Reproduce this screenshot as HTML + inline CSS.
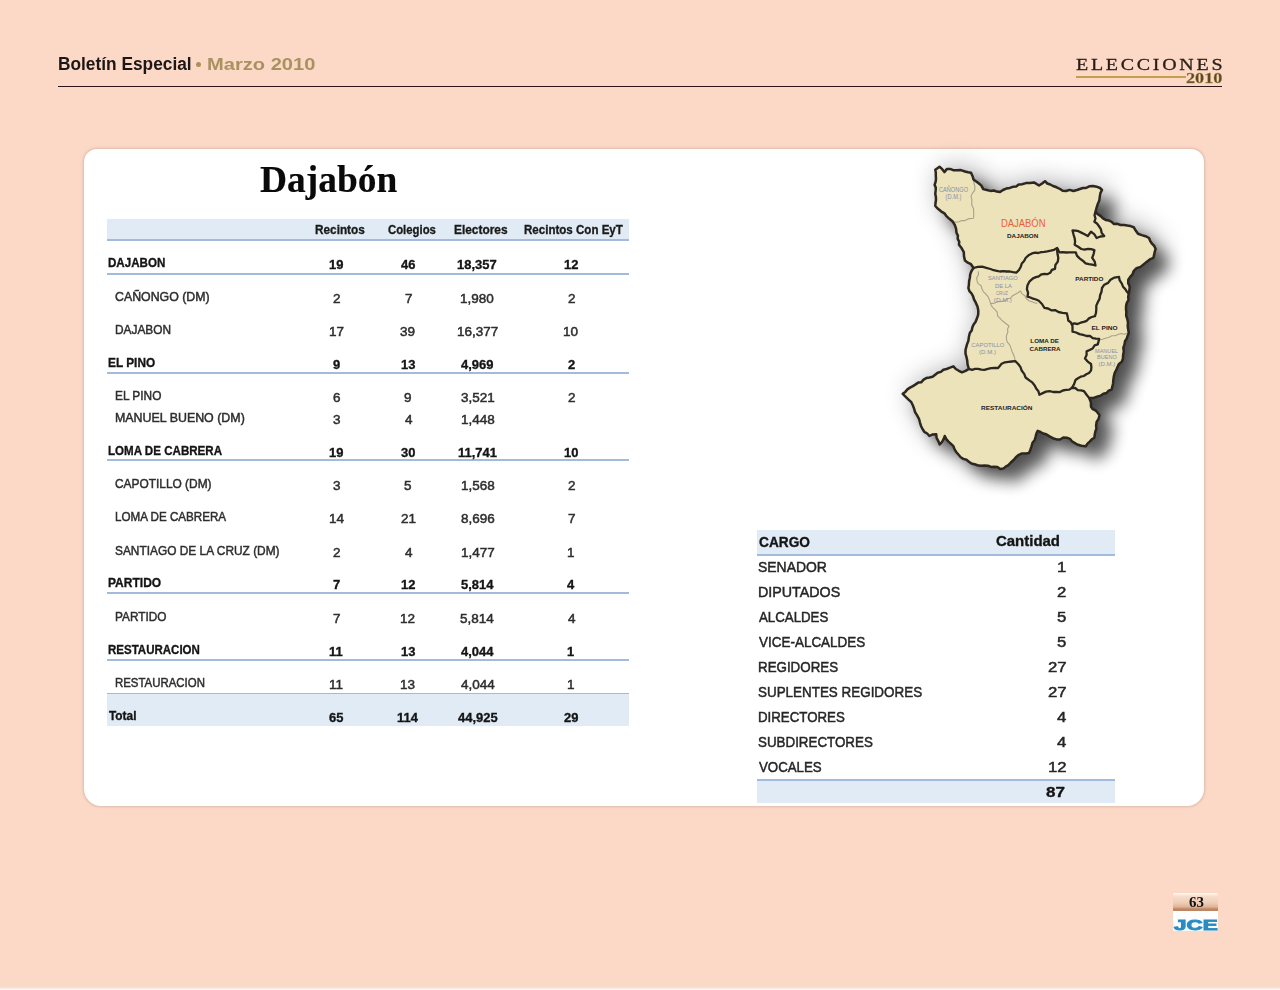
<!DOCTYPE html>
<html><head><meta charset="utf-8">
<style>
html,body{margin:0;padding:0;}
body{width:1280px;height:990px;background:#FCD9C6;position:relative;overflow:hidden;font-family:"Liberation Sans",sans-serif;}
.a{position:absolute;white-space:nowrap;line-height:1;transform-origin:0 0;}
.r{position:absolute;}
</style></head>
<body>
<div class="r" style="left:0;top:986px;width:1280px;height:4px;background:linear-gradient(#F6DCCB,#F2E4DC 50%,#FFFFFF);"></div>
<!-- header rule -->
<div class="r" style="left:58px;top:86px;width:1164px;height:1.3px;background:#2a1616;"></div>
<div class="r" style="left:196.2px;top:62.1px;width:5px;height:5px;border-radius:50%;background:#A8915A;"></div>
<div class="r" style="left:1075.5px;top:75.6px;width:110px;height:2.2px;background:#C59E4E;"></div>

<!-- card -->
<div class="r" style="left:84px;top:149px;width:1120px;height:656.8px;background:#FFFFFF;border-radius:13px 13px 17px 17px;box-shadow:0 0 2.5px 0.5px rgba(175,140,130,0.38);"></div>

<!-- left table bands & lines -->
<div class="r" style="left:107px;top:219px;width:522px;height:20.5px;background:#E1EBF5;"></div>
<div class="r" style="left:107px;top:239px;width:522px;height:1.6px;background:#A2BADB;"></div>
<div class="r" style="left:107px;top:272.5px;width:522px;height:2px;background:#A2BADB;"></div>
<div class="r" style="left:107px;top:372px;width:522px;height:2px;background:#A2BADB;"></div>
<div class="r" style="left:107px;top:459.4px;width:522px;height:2px;background:#A2BADB;"></div>
<div class="r" style="left:107px;top:592.3px;width:522px;height:2px;background:#A2BADB;"></div>
<div class="r" style="left:107px;top:659.3px;width:522px;height:2px;background:#A2BADB;"></div>
<div class="r" style="left:107px;top:693px;width:522px;height:33.4px;background:#E1EBF5;"></div>
<div class="r" style="left:107px;top:692.6px;width:522px;height:1.8px;background:#A2BADB;"></div>

<!-- right table bands & lines -->
<div class="r" style="left:756.8px;top:529.8px;width:357.8px;height:24.6px;background:#E1EBF5;"></div>
<div class="r" style="left:756.8px;top:554.1px;width:357.8px;height:1.9px;background:#A2BADB;"></div>
<div class="r" style="left:756.8px;top:779.5px;width:357.8px;height:23.4px;background:#E1EBF5;"></div>
<div class="r" style="left:756.8px;top:778.8px;width:357.8px;height:1.9px;background:#A2BADB;"></div>

<!-- logo -->
<div class="r" style="left:1172.6px;top:892.7px;width:45.3px;height:38.2px;background:linear-gradient(#EAF8FB,#FFFFFF 60%,#F4FBFD);border-radius:2px;"></div>
<div class="r" style="left:1172.6px;top:892.7px;width:45.3px;height:18.3px;background:linear-gradient(#FFF8F0,#F6DCC9 20%,#EFCDB6 55%,#E0B394 78%,#C08A68 88%,#BA8462 100%);border-radius:2px 2px 0 0;"></div>

<svg class="r" style="left:860px;top:140px;" width="340" height="380" viewBox="860 140 340 380">
<defs>
<filter id="sh" x="-30%" y="-30%" width="170%" height="170%">
<feGaussianBlur in="SourceAlpha" stdDeviation="8" result="b1"/>
<feOffset in="b1" dx="14" dy="13" result="o1"/>
<feComponentTransfer in="o1" result="c1"><feFuncA type="linear" slope="0.6"/></feComponentTransfer>
<feGaussianBlur in="SourceAlpha" stdDeviation="14" result="b2"/>
<feOffset in="b2" dx="5" dy="0" result="o2"/>
<feComponentTransfer in="o2" result="c2"><feFuncA type="linear" slope="0.38"/></feComponentTransfer>
<feMerge><feMergeNode in="c2"/><feMergeNode in="c1"/></feMerge>
</filter>
</defs>
<path id="outl" d="M935.3,169.7 L939.5,166.7 L942.2,169.2 L944.4,172.1 L946.8,169.1 L950.1,168.9 L953.2,170.2 L956.5,170.3 L960.9,170.1 L965.0,171.5 L968.0,172.2 L971.0,172.7 L972.5,176.0 L973.5,179.4 L978.3,183.0 L981.4,185.6 L983.2,189.1 L986.8,190.0 L990.5,190.9 L993.8,190.5 L996.8,191.6 L1000.0,192.1 L1003.0,190.0 L1006.2,188.6 L1009.8,187.9 L1012.8,186.8 L1016.1,186.6 L1018.8,184.5 L1022.0,184.2 L1025.9,183.1 L1030.0,183.0 L1034.0,182.4 L1039.0,185.5 L1042.1,183.5 L1045.0,181.2 L1047.3,183.5 L1050.3,184.5 L1053.0,186.0 L1056.6,187.3 L1060.0,189.0 L1062.7,190.8 L1066.0,191.0 L1069.6,189.9 L1073.4,191.0 L1077.0,190.0 L1079.9,189.0 L1082.9,188.0 L1086.0,188.0 L1089.3,186.3 L1093.0,186.0 L1096.6,186.7 L1100.0,188.0 L1102.0,190.0 L1100.4,193.1 L1099.8,196.6 L1099.3,200.6 L1097.7,204.2 L1096.5,208.0 L1095.5,211.9 L1097.8,214.3 L1100.7,216.1 L1103.0,218.4 L1105.7,219.9 L1108.9,220.5 L1111.6,221.9 L1114.0,224.0 L1117.4,223.8 L1120.6,225.0 L1124.0,225.0 L1127.3,225.6 L1130.5,226.1 L1133.7,227.2 L1135.7,230.6 L1138.0,233.8 L1141.7,235.1 L1145.5,236.2 L1149.0,238.0 L1150.2,241.0 L1152.0,243.7 L1154.3,246.0 L1155.6,249.0 L1154.7,251.9 L1154.1,254.9 L1153.4,257.8 L1149.8,259.4 L1146.6,261.9 L1143.6,264.4 L1140.5,266.9 L1136.5,268.1 L1133.7,271.0 L1132.5,274.3 L1130.2,276.9 L1128.3,279.7 L1128.2,283.2 L1129.7,286.5 L1129.4,290.0 L1128.8,293.8 L1128.2,296.8 L1128.5,300.0 L1126.8,302.8 L1126.1,305.9 L1126.0,309.0 L1126.3,312.4 L1126.2,315.8 L1127.3,319.0 L1128.0,322.5 L1127.7,326.0 L1128.2,329.5 L1128.8,333.0 L1127.6,335.8 L1126.7,338.7 L1125.0,341.3 L1124.5,344.4 L1123.3,347.8 L1123.8,351.4 L1123.1,354.9 L1123.0,358.4 L1121.8,361.7 L1119.0,363.9 L1117.5,367.0 L1116.2,370.2 L1114.6,373.2 L1113.8,376.6 L1113.3,380.0 L1113.1,383.2 L1112.4,386.4 L1111.6,389.5 L1108.7,390.6 L1106.5,393.0 L1103.4,393.7 L1100.8,395.6 L1097.8,396.4 L1093.6,397.9 L1089.2,398.1 L1090.9,402.2 L1091.0,406.7 L1092.8,409.2 L1095.7,410.5 L1097.7,412.8 L1099.5,415.3 L1098.6,418.8 L1096.6,422.0 L1096.1,425.6 L1096.4,428.7 L1095.3,431.7 L1094.7,434.7 L1094.4,437.7 L1091.8,439.3 L1089.7,441.6 L1087.5,443.6 L1085.8,446.2 L1081.4,445.8 L1077.2,444.5 L1074.5,442.9 L1071.9,441.3 L1069.9,438.8 L1066.9,437.7 L1063.3,437.5 L1060.1,439.5 L1056.6,439.4 L1052.9,438.2 L1049.5,436.4 L1046.2,434.2 L1043.2,433.5 L1040.5,432.0 L1037.7,430.8 L1036.3,433.7 L1035.5,437.0 L1034.6,440.2 L1032.5,442.8 L1031.5,446.3 L1030.4,449.7 L1029.0,453.1 L1025.6,453.5 L1022.0,453.4 L1018.8,454.8 L1015.9,457.2 L1013.6,460.0 L1010.8,462.5 L1008.4,465.2 L1005.7,466.6 L1003.3,468.6 L1000.2,469.0 L997.4,467.0 L994.3,466.8 L991.2,466.9 L987.9,465.8 L984.4,465.5 L980.9,465.8 L977.5,465.2 L974.6,464.2 L971.5,463.5 L968.9,461.7 L966.5,459.8 L963.3,458.9 L960.7,457.2 L958.6,454.8 L956.4,452.2 L954.6,449.4 L953.4,446.2 L951.0,443.9 L948.5,441.6 L946.3,439.1 L944.8,436.0 L943.6,439.2 L942.0,442.0 L939.7,444.5 L938.3,441.1 L936.6,437.9 L936.2,434.2 L932.7,434.4 L929.4,436.0 L927.2,433.5 L924.3,431.8 L922.5,429.0 L920.9,425.7 L919.9,422.3 L919.0,418.8 L917.1,415.4 L915.1,412.1 L914.0,408.4 L912.8,405.2 L911.3,402.2 L908.8,399.8 L905.7,396.8 L902.7,393.8 L905.3,391.9 L907.4,389.4 L910.0,387.6 L912.9,386.1 L915.6,384.4 L918.2,382.6 L921.4,382.2 L923.6,379.7 L926.3,378.1 L929.4,377.5 L932.6,376.8 L935.2,374.7 L937.7,372.7 L940.9,371.9 L943.4,369.7 L946.6,369.0 L950.0,367.7 L953.4,366.3 L955.8,369.0 L958.8,370.8 L962.0,372.3 L965.6,370.9 L968.9,368.9 L967.6,364.7 L967.2,360.3 L966.4,356.9 L965.5,353.5 L965.5,350.0 L967.0,344.4 L968.4,340.7 L968.9,336.8 L969.8,333.0 L971.7,330.5 L972.4,327.3 L973.6,324.4 L975.5,321.9 L977.0,318.3 L978.2,314.6 L978.3,310.6 L977.5,306.6 L975.9,302.9 L974.0,299.4 L973.1,296.3 L971.6,293.5 L969.4,291.1 L968.4,288.0 L968.9,284.7 L969.1,281.3 L969.8,278.0 L970.2,274.4 L971.5,271.0 L973.5,268.0 L971.0,264.2 L967.8,262.7 L965.0,260.6 L964.0,256.4 L963.8,252.1 L961.7,248.3 L959.0,244.8 L959.2,241.6 L957.7,238.8 L957.9,235.6 L956.5,232.7 L956.1,228.8 L954.9,225.2 L952.9,221.8 L950.6,219.8 L948.3,217.9 L946.2,215.8 L944.4,213.3 L941.0,211.3 L938.0,208.8 L935.3,206.0 L935.5,203.0 L936.0,199.9 L935.9,196.9 L935.3,193.9 L935.6,190.9 L935.8,187.8 L934.6,184.8 L935.6,181.8 L936.0,178.8 L935.8,175.8 L935.8,172.7 L935.3,169.7 Z" fill="#000" filter="url(#sh)"/>
<path d="M935.3,169.7 L939.5,166.7 L942.2,169.2 L944.4,172.1 L946.8,169.1 L950.1,168.9 L953.2,170.2 L956.5,170.3 L960.9,170.1 L965.0,171.5 L968.0,172.2 L971.0,172.7 L972.5,176.0 L973.5,179.4 L978.3,183.0 L981.4,185.6 L983.2,189.1 L986.8,190.0 L990.5,190.9 L993.8,190.5 L996.8,191.6 L1000.0,192.1 L1003.0,190.0 L1006.2,188.6 L1009.8,187.9 L1012.8,186.8 L1016.1,186.6 L1018.8,184.5 L1022.0,184.2 L1025.9,183.1 L1030.0,183.0 L1034.0,182.4 L1039.0,185.5 L1042.1,183.5 L1045.0,181.2 L1047.3,183.5 L1050.3,184.5 L1053.0,186.0 L1056.6,187.3 L1060.0,189.0 L1062.7,190.8 L1066.0,191.0 L1069.6,189.9 L1073.4,191.0 L1077.0,190.0 L1079.9,189.0 L1082.9,188.0 L1086.0,188.0 L1089.3,186.3 L1093.0,186.0 L1096.6,186.7 L1100.0,188.0 L1102.0,190.0 L1100.4,193.1 L1099.8,196.6 L1099.3,200.6 L1097.7,204.2 L1096.5,208.0 L1095.5,211.9 L1097.8,214.3 L1100.7,216.1 L1103.0,218.4 L1105.7,219.9 L1108.9,220.5 L1111.6,221.9 L1114.0,224.0 L1117.4,223.8 L1120.6,225.0 L1124.0,225.0 L1127.3,225.6 L1130.5,226.1 L1133.7,227.2 L1135.7,230.6 L1138.0,233.8 L1141.7,235.1 L1145.5,236.2 L1149.0,238.0 L1150.2,241.0 L1152.0,243.7 L1154.3,246.0 L1155.6,249.0 L1154.7,251.9 L1154.1,254.9 L1153.4,257.8 L1149.8,259.4 L1146.6,261.9 L1143.6,264.4 L1140.5,266.9 L1136.5,268.1 L1133.7,271.0 L1132.5,274.3 L1130.2,276.9 L1128.3,279.7 L1128.2,283.2 L1129.7,286.5 L1129.4,290.0 L1128.8,293.8 L1128.2,296.8 L1128.5,300.0 L1126.8,302.8 L1126.1,305.9 L1126.0,309.0 L1126.3,312.4 L1126.2,315.8 L1127.3,319.0 L1128.0,322.5 L1127.7,326.0 L1128.2,329.5 L1128.8,333.0 L1127.6,335.8 L1126.7,338.7 L1125.0,341.3 L1124.5,344.4 L1123.3,347.8 L1123.8,351.4 L1123.1,354.9 L1123.0,358.4 L1121.8,361.7 L1119.0,363.9 L1117.5,367.0 L1116.2,370.2 L1114.6,373.2 L1113.8,376.6 L1113.3,380.0 L1113.1,383.2 L1112.4,386.4 L1111.6,389.5 L1108.7,390.6 L1106.5,393.0 L1103.4,393.7 L1100.8,395.6 L1097.8,396.4 L1093.6,397.9 L1089.2,398.1 L1090.9,402.2 L1091.0,406.7 L1092.8,409.2 L1095.7,410.5 L1097.7,412.8 L1099.5,415.3 L1098.6,418.8 L1096.6,422.0 L1096.1,425.6 L1096.4,428.7 L1095.3,431.7 L1094.7,434.7 L1094.4,437.7 L1091.8,439.3 L1089.7,441.6 L1087.5,443.6 L1085.8,446.2 L1081.4,445.8 L1077.2,444.5 L1074.5,442.9 L1071.9,441.3 L1069.9,438.8 L1066.9,437.7 L1063.3,437.5 L1060.1,439.5 L1056.6,439.4 L1052.9,438.2 L1049.5,436.4 L1046.2,434.2 L1043.2,433.5 L1040.5,432.0 L1037.7,430.8 L1036.3,433.7 L1035.5,437.0 L1034.6,440.2 L1032.5,442.8 L1031.5,446.3 L1030.4,449.7 L1029.0,453.1 L1025.6,453.5 L1022.0,453.4 L1018.8,454.8 L1015.9,457.2 L1013.6,460.0 L1010.8,462.5 L1008.4,465.2 L1005.7,466.6 L1003.3,468.6 L1000.2,469.0 L997.4,467.0 L994.3,466.8 L991.2,466.9 L987.9,465.8 L984.4,465.5 L980.9,465.8 L977.5,465.2 L974.6,464.2 L971.5,463.5 L968.9,461.7 L966.5,459.8 L963.3,458.9 L960.7,457.2 L958.6,454.8 L956.4,452.2 L954.6,449.4 L953.4,446.2 L951.0,443.9 L948.5,441.6 L946.3,439.1 L944.8,436.0 L943.6,439.2 L942.0,442.0 L939.7,444.5 L938.3,441.1 L936.6,437.9 L936.2,434.2 L932.7,434.4 L929.4,436.0 L927.2,433.5 L924.3,431.8 L922.5,429.0 L920.9,425.7 L919.9,422.3 L919.0,418.8 L917.1,415.4 L915.1,412.1 L914.0,408.4 L912.8,405.2 L911.3,402.2 L908.8,399.8 L905.7,396.8 L902.7,393.8 L905.3,391.9 L907.4,389.4 L910.0,387.6 L912.9,386.1 L915.6,384.4 L918.2,382.6 L921.4,382.2 L923.6,379.7 L926.3,378.1 L929.4,377.5 L932.6,376.8 L935.2,374.7 L937.7,372.7 L940.9,371.9 L943.4,369.7 L946.6,369.0 L950.0,367.7 L953.4,366.3 L955.8,369.0 L958.8,370.8 L962.0,372.3 L965.6,370.9 L968.9,368.9 L967.6,364.7 L967.2,360.3 L966.4,356.9 L965.5,353.5 L965.5,350.0 L967.0,344.4 L968.4,340.7 L968.9,336.8 L969.8,333.0 L971.7,330.5 L972.4,327.3 L973.6,324.4 L975.5,321.9 L977.0,318.3 L978.2,314.6 L978.3,310.6 L977.5,306.6 L975.9,302.9 L974.0,299.4 L973.1,296.3 L971.6,293.5 L969.4,291.1 L968.4,288.0 L968.9,284.7 L969.1,281.3 L969.8,278.0 L970.2,274.4 L971.5,271.0 L973.5,268.0 L971.0,264.2 L967.8,262.7 L965.0,260.6 L964.0,256.4 L963.8,252.1 L961.7,248.3 L959.0,244.8 L959.2,241.6 L957.7,238.8 L957.9,235.6 L956.5,232.7 L956.1,228.8 L954.9,225.2 L952.9,221.8 L950.6,219.8 L948.3,217.9 L946.2,215.8 L944.4,213.3 L941.0,211.3 L938.0,208.8 L935.3,206.0 L935.5,203.0 L936.0,199.9 L935.9,196.9 L935.3,193.9 L935.6,190.9 L935.8,187.8 L934.6,184.8 L935.6,181.8 L936.0,178.8 L935.8,175.8 L935.8,172.7 L935.3,169.7 Z" fill="#ECE3BA"/>
<g fill="none" stroke="#A8A28C" stroke-width="1.1" stroke-linejoin="round">
<path d="M973.5,179.4 L973.9,183.0 L974.9,186.6 L974.7,190.3 L972.4,193.1 L971.0,196.4 L971.9,199.4 L971.7,202.6 L972.0,205.6 L973.5,208.5 L973.7,211.7 L973.7,215.0 L973.5,218.2 L969.0,218.6 L965.0,220.6 L961.9,220.5 L959.0,221.8 L956.0,222.2 L952.9,221.8"/>
<path d="M978.3,271.2 L978.5,274.6 L976.7,277.7 L977.0,281.0 L978.4,283.9 L981.2,285.8 L982.0,289.1 L983.6,291.9 L985.9,294.2 L988.0,296.6 L989.8,300.7 L991.0,305.0 L992.8,307.6 L995.2,309.8 L997.2,312.2 L997.6,315.8 L999.9,318.1 L1002.0,320.5 L1005.5,323.3 L1009.0,326.0 L1007.6,329.0 L1007.8,332.4 L1006.4,335.4 L1006.4,338.8 L1007.3,342.2 L1009.7,344.9 L1011.0,348.1 L1012.0,351.4 L1013.5,354.5 L1014.6,357.8 L1015.3,361.2"/>
<path d="M991.0,303.6 L994.5,303.1 L997.9,301.8 L1001.5,301.4 L1005.0,300.8 L1007.2,298.6 L1010.6,298.2 L1012.6,295.7 L1015.3,294.2 L1018.0,292.8 L1020.5,291.0 L1022.1,293.9 L1024.9,295.8 L1026.3,298.8 L1029.0,300.8 L1033.1,302.2 L1037.3,303.6"/>
<path d="M1099.2,340.0 L1102.5,339.2 L1105.7,338.2 L1109.0,337.3 L1111.9,335.7 L1115.1,335.8 L1118.0,334.6 L1121.0,333.6 L1124.4,334.2 L1127.3,333.0"/>
</g>
<g fill="none" stroke="#2C2720" stroke-width="2.3" stroke-linejoin="round">
<path d="M973.5,268.0 L977.7,266.8 L982.0,266.7 L986.3,267.8 L990.5,269.0 L993.6,270.2 L996.8,270.8 L1000.0,271.5 L1003.3,271.2 L1006.5,271.5 L1009.8,271.5 L1013.0,272.2 L1016.3,272.7 L1019.0,270.0 L1020.8,266.7 L1021.8,263.5 L1024.1,261.0 L1025.6,258.0 L1028.5,255.3 L1032.0,253.4 L1035.0,252.6 L1038.2,253.0 L1041.2,252.2 L1044.3,251.8 L1047.3,251.3 L1050.7,250.6 L1054.1,249.8 L1057.2,248.0 L1059.4,252.3 L1062.7,252.2 L1066.0,252.5 L1069.2,252.3 L1072.5,252.3 L1075.8,252.3 L1076.9,255.6 L1079.6,258.4 L1082.8,260.7 L1085.6,263.3 L1088.9,264.1 L1092.2,264.7 L1095.5,265.5 L1094.6,261.3 L1092.2,257.8 L1093.6,254.1 L1094.4,250.2 L1091.2,249.2 L1087.9,248.8 L1084.5,249.7 L1081.3,249.0 L1078.1,246.8 L1074.7,244.7 L1075.1,241.3 L1074.6,238.0 L1073.6,234.8 L1072.5,230.5 L1075.6,230.6 L1078.5,231.2 L1081.3,232.6 L1084.6,234.2 L1087.8,236.0 L1091.0,231.6 L1094.4,234.3 L1096.6,238.0 L1100.3,236.5 L1104.2,236.0 L1101.7,233.0 L1100.9,229.2 L1098.8,226.0 L1097.0,223.5 L1094.4,221.7 L1095.5,218.5 L1094.5,215.1 L1095.5,211.9"/>
<path d="M1057.2,248.0 L1057.2,251.3 L1057.6,254.6 L1058.3,257.8 L1057.8,261.6 L1055.4,264.9 L1055.0,268.8 L1051.9,269.9 L1050.2,272.8 L1047.3,274.2 L1044.4,274.0 L1041.3,274.3 L1038.8,276.3 L1035.9,277.2 L1033.0,278.3 L1029.6,281.3 L1027.5,285.3 L1026.9,289.1 L1028.1,292.8 L1027.5,296.6 L1030.4,297.5 L1033.1,298.7 L1036.0,299.5 L1038.8,300.8 L1042.0,304.0 L1044.4,307.8 L1048.0,308.5 L1051.3,310.3 L1055.1,310.1 L1058.4,312.0 L1062.6,312.8 L1066.9,313.4 L1067.7,316.9 L1068.3,320.5 L1071.1,322.7 L1072.5,326.0 L1072.5,331.7 L1076.1,332.5 L1079.5,334.1 L1083.1,334.9 L1086.6,336.0 L1089.9,335.9 L1092.7,338.2 L1095.9,338.6 L1099.2,338.8 L1097.8,344.4 L1094.6,345.4 L1092.6,348.5 L1089.6,350.0 L1086.6,351.4 L1086.6,355.1 L1085.0,358.4 L1087.7,361.6 L1091.0,364.0 L1091.4,367.3 L1091.0,370.6 L1089.0,372.9 L1086.3,374.3 L1083.8,376.0 L1080.7,376.7 L1078.0,378.2 L1075.5,380.0 L1074.1,384.1 L1072.0,387.8"/>
<path d="M1071.0,324.7 L1074.1,323.4 L1077.5,324.0 L1080.6,322.7 L1083.8,321.9 L1086.7,320.8 L1089.0,318.4 L1091.8,317.0 L1095.0,316.2 L1096.0,312.8 L1096.3,309.2 L1096.3,305.6 L1097.8,302.2 L1099.6,298.9 L1100.1,295.2 L1101.5,291.7 L1102.0,288.0 L1104.3,284.7 L1108.1,282.9 L1110.5,279.7 L1114.5,277.6 L1119.0,276.9 L1119.7,280.4 L1121.7,283.4 L1123.0,286.7 L1125.1,288.9 L1126.8,291.5 L1128.8,293.8"/>
<path d="M968.9,368.9 L972.0,369.8 L975.1,368.8 L978.2,368.8 L981.3,369.7 L984.4,369.8 L987.8,368.9 L991.2,368.2 L994.6,367.8 L998.1,368.0 L1001.6,363.8 L1004.9,362.3 L1008.4,361.9 L1011.8,361.5 L1015.3,361.2 L1018.2,364.0 L1020.5,367.2 L1021.8,370.8 L1024.2,373.9 L1025.6,377.5 L1029.0,380.1 L1032.5,382.7 L1034.7,385.4 L1036.2,388.6 L1038.4,391.3 L1039.4,394.7 L1042.7,393.1 L1046.0,391.6 L1049.7,391.2 L1053.1,392.0 L1056.6,391.9 L1060.0,392.1 L1062.8,390.5 L1066.0,389.9 L1069.3,389.6 L1072.0,387.8 L1075.2,388.0 L1077.8,390.1 L1081.0,390.3 L1084.0,391.2 L1086.6,394.7 L1089.2,398.1"/>
</g>
<path d="M935.3,169.7 L939.5,166.7 L942.2,169.2 L944.4,172.1 L946.8,169.1 L950.1,168.9 L953.2,170.2 L956.5,170.3 L960.9,170.1 L965.0,171.5 L968.0,172.2 L971.0,172.7 L972.5,176.0 L973.5,179.4 L978.3,183.0 L981.4,185.6 L983.2,189.1 L986.8,190.0 L990.5,190.9 L993.8,190.5 L996.8,191.6 L1000.0,192.1 L1003.0,190.0 L1006.2,188.6 L1009.8,187.9 L1012.8,186.8 L1016.1,186.6 L1018.8,184.5 L1022.0,184.2 L1025.9,183.1 L1030.0,183.0 L1034.0,182.4 L1039.0,185.5 L1042.1,183.5 L1045.0,181.2 L1047.3,183.5 L1050.3,184.5 L1053.0,186.0 L1056.6,187.3 L1060.0,189.0 L1062.7,190.8 L1066.0,191.0 L1069.6,189.9 L1073.4,191.0 L1077.0,190.0 L1079.9,189.0 L1082.9,188.0 L1086.0,188.0 L1089.3,186.3 L1093.0,186.0 L1096.6,186.7 L1100.0,188.0 L1102.0,190.0 L1100.4,193.1 L1099.8,196.6 L1099.3,200.6 L1097.7,204.2 L1096.5,208.0 L1095.5,211.9 L1097.8,214.3 L1100.7,216.1 L1103.0,218.4 L1105.7,219.9 L1108.9,220.5 L1111.6,221.9 L1114.0,224.0 L1117.4,223.8 L1120.6,225.0 L1124.0,225.0 L1127.3,225.6 L1130.5,226.1 L1133.7,227.2 L1135.7,230.6 L1138.0,233.8 L1141.7,235.1 L1145.5,236.2 L1149.0,238.0 L1150.2,241.0 L1152.0,243.7 L1154.3,246.0 L1155.6,249.0 L1154.7,251.9 L1154.1,254.9 L1153.4,257.8 L1149.8,259.4 L1146.6,261.9 L1143.6,264.4 L1140.5,266.9 L1136.5,268.1 L1133.7,271.0 L1132.5,274.3 L1130.2,276.9 L1128.3,279.7 L1128.2,283.2 L1129.7,286.5 L1129.4,290.0 L1128.8,293.8 L1128.2,296.8 L1128.5,300.0 L1126.8,302.8 L1126.1,305.9 L1126.0,309.0 L1126.3,312.4 L1126.2,315.8 L1127.3,319.0 L1128.0,322.5 L1127.7,326.0 L1128.2,329.5 L1128.8,333.0 L1127.6,335.8 L1126.7,338.7 L1125.0,341.3 L1124.5,344.4 L1123.3,347.8 L1123.8,351.4 L1123.1,354.9 L1123.0,358.4 L1121.8,361.7 L1119.0,363.9 L1117.5,367.0 L1116.2,370.2 L1114.6,373.2 L1113.8,376.6 L1113.3,380.0 L1113.1,383.2 L1112.4,386.4 L1111.6,389.5 L1108.7,390.6 L1106.5,393.0 L1103.4,393.7 L1100.8,395.6 L1097.8,396.4 L1093.6,397.9 L1089.2,398.1 L1090.9,402.2 L1091.0,406.7 L1092.8,409.2 L1095.7,410.5 L1097.7,412.8 L1099.5,415.3 L1098.6,418.8 L1096.6,422.0 L1096.1,425.6 L1096.4,428.7 L1095.3,431.7 L1094.7,434.7 L1094.4,437.7 L1091.8,439.3 L1089.7,441.6 L1087.5,443.6 L1085.8,446.2 L1081.4,445.8 L1077.2,444.5 L1074.5,442.9 L1071.9,441.3 L1069.9,438.8 L1066.9,437.7 L1063.3,437.5 L1060.1,439.5 L1056.6,439.4 L1052.9,438.2 L1049.5,436.4 L1046.2,434.2 L1043.2,433.5 L1040.5,432.0 L1037.7,430.8 L1036.3,433.7 L1035.5,437.0 L1034.6,440.2 L1032.5,442.8 L1031.5,446.3 L1030.4,449.7 L1029.0,453.1 L1025.6,453.5 L1022.0,453.4 L1018.8,454.8 L1015.9,457.2 L1013.6,460.0 L1010.8,462.5 L1008.4,465.2 L1005.7,466.6 L1003.3,468.6 L1000.2,469.0 L997.4,467.0 L994.3,466.8 L991.2,466.9 L987.9,465.8 L984.4,465.5 L980.9,465.8 L977.5,465.2 L974.6,464.2 L971.5,463.5 L968.9,461.7 L966.5,459.8 L963.3,458.9 L960.7,457.2 L958.6,454.8 L956.4,452.2 L954.6,449.4 L953.4,446.2 L951.0,443.9 L948.5,441.6 L946.3,439.1 L944.8,436.0 L943.6,439.2 L942.0,442.0 L939.7,444.5 L938.3,441.1 L936.6,437.9 L936.2,434.2 L932.7,434.4 L929.4,436.0 L927.2,433.5 L924.3,431.8 L922.5,429.0 L920.9,425.7 L919.9,422.3 L919.0,418.8 L917.1,415.4 L915.1,412.1 L914.0,408.4 L912.8,405.2 L911.3,402.2 L908.8,399.8 L905.7,396.8 L902.7,393.8 L905.3,391.9 L907.4,389.4 L910.0,387.6 L912.9,386.1 L915.6,384.4 L918.2,382.6 L921.4,382.2 L923.6,379.7 L926.3,378.1 L929.4,377.5 L932.6,376.8 L935.2,374.7 L937.7,372.7 L940.9,371.9 L943.4,369.7 L946.6,369.0 L950.0,367.7 L953.4,366.3 L955.8,369.0 L958.8,370.8 L962.0,372.3 L965.6,370.9 L968.9,368.9 L967.6,364.7 L967.2,360.3 L966.4,356.9 L965.5,353.5 L965.5,350.0 L967.0,344.4 L968.4,340.7 L968.9,336.8 L969.8,333.0 L971.7,330.5 L972.4,327.3 L973.6,324.4 L975.5,321.9 L977.0,318.3 L978.2,314.6 L978.3,310.6 L977.5,306.6 L975.9,302.9 L974.0,299.4 L973.1,296.3 L971.6,293.5 L969.4,291.1 L968.4,288.0 L968.9,284.7 L969.1,281.3 L969.8,278.0 L970.2,274.4 L971.5,271.0 L973.5,268.0 L971.0,264.2 L967.8,262.7 L965.0,260.6 L964.0,256.4 L963.8,252.1 L961.7,248.3 L959.0,244.8 L959.2,241.6 L957.7,238.8 L957.9,235.6 L956.5,232.7 L956.1,228.8 L954.9,225.2 L952.9,221.8 L950.6,219.8 L948.3,217.9 L946.2,215.8 L944.4,213.3 L941.0,211.3 L938.0,208.8 L935.3,206.0 L935.5,203.0 L936.0,199.9 L935.9,196.9 L935.3,193.9 L935.6,190.9 L935.8,187.8 L934.6,184.8 L935.6,181.8 L936.0,178.8 L935.8,175.8 L935.8,172.7 L935.3,169.7 Z" fill="none" stroke="#2C2720" stroke-width="2.5" stroke-linejoin="round"/>
<g font-family="Liberation Sans, sans-serif" font-size="6.5">
<text x="939" y="192.1" fill="#8D8DA6" textLength="29" lengthAdjust="spacingAndGlyphs">CAÑONGO</text>
<text x="945.6" y="199.4" fill="#8D8DA6" textLength="15.8" lengthAdjust="spacingAndGlyphs">(D.M.)</text>
<text x="1001" y="227.2" fill="#E8603C" font-size="10" textLength="44.5" lengthAdjust="spacingAndGlyphs">DAJABÓN</text>
<text x="1007" y="237.5" fill="#222" font-weight="bold" font-size="5.5" textLength="31.3" lengthAdjust="spacingAndGlyphs">DAJABON</text>
<text x="1075.3" y="281" fill="#222" font-weight="bold" font-size="6" textLength="28.1" lengthAdjust="spacingAndGlyphs">PARTIDO</text>
<text x="988" y="280.4" fill="#8D8DA6" font-size="6" textLength="29.7" lengthAdjust="spacingAndGlyphs">SANTIAGO</text>
<text x="995" y="288" fill="#8D8DA6" font-size="6" textLength="17" lengthAdjust="spacingAndGlyphs">DE LA</text>
<text x="996" y="294.5" fill="#8D8DA6" font-size="6" textLength="12" lengthAdjust="spacingAndGlyphs">CRUZ</text>
<text x="993.8" y="301.5" fill="#8D8DA6" font-size="6" textLength="18.2" lengthAdjust="spacingAndGlyphs">(D.M.)</text>
<text x="1091.5" y="330.3" fill="#222" font-weight="bold" font-size="6" textLength="26" lengthAdjust="spacingAndGlyphs">EL PINO</text>
<text x="1030.3" y="343" fill="#222" font-weight="bold" font-size="5.5" textLength="28.7" lengthAdjust="spacingAndGlyphs">LOMA DE</text>
<text x="1029.6" y="351.4" fill="#222" font-weight="bold" font-size="5.5" textLength="30.9" lengthAdjust="spacingAndGlyphs">CABRERA</text>
<text x="971.3" y="346.5" fill="#8D8DA6" font-size="6" textLength="33" lengthAdjust="spacingAndGlyphs">CAPOTILLO</text>
<text x="979" y="353.5" fill="#8D8DA6" font-size="6" textLength="17" lengthAdjust="spacingAndGlyphs">(D.M.)</text>
<text x="1095" y="352.8" fill="#8D8DA6" font-size="6" textLength="23.2" lengthAdjust="spacingAndGlyphs">MANUEL</text>
<text x="1097" y="359" fill="#8D8DA6" font-size="6" textLength="19.8" lengthAdjust="spacingAndGlyphs">BUENO</text>
<text x="1098.5" y="366.2" fill="#8D8DA6" font-size="6" textLength="16.9" lengthAdjust="spacingAndGlyphs">(D.M.)</text>
<text x="981" y="410.2" fill="#222" font-weight="bold" font-size="5.5" textLength="51.5" lengthAdjust="spacingAndGlyphs">RESTAURACIÓN</text>
</g>
</svg>


<div class="a" style="left:57.81px;top:56.29px;font-family:'Liberation Sans',sans-serif;font-size:17.5px;font-weight:bold;color:#1c1616;transform:scaleX(0.9887);">Boletín Especial</div>
<div class="a" style="left:206.80px;top:56.68px;font-family:'Liberation Sans',sans-serif;font-size:16.8px;font-weight:bold;color:#A89260;transform:scaleX(1.1978);">Marzo 2010</div>
<div class="a" style="left:1075.81px;top:57.03px;font-family:'Liberation Serif',serif;font-size:16.8px;letter-spacing:2.3px;color:#2a1e18;transform:scaleX(1.1885);-webkit-text-stroke:0.3px #2a1e18;">ELECCIONES</div>
<div class="a" style="left:1185.50px;top:69.52px;font-family:'Liberation Serif',serif;font-size:15.5px;font-weight:bold;color:#5A4A26;transform:scaleX(1.1774);-webkit-text-stroke:0.35px #A88A45;">2010</div>
<div class="a" style="left:260.25px;top:160.08px;font-family:'Liberation Serif',serif;font-size:38px;font-weight:bold;color:#0a0a0a;transform:scaleX(0.9856);-webkit-text-stroke:0.15px #0a0a0a;">Dajabón</div>
<div class="a" style="left:1188.50px;top:896.17px;font-family:'Liberation Serif',serif;font-size:14px;font-weight:bold;color:#111;transform:scaleX(1.0643);">63</div>
<div class="a" style="left:1173.80px;top:918.05px;font-family:'Liberation Sans',sans-serif;font-size:14px;font-weight:bold;color:#2A8BBF;transform:scaleX(1.6000);-webkit-text-stroke:0.35px #2A8BBF;-webkit-text-stroke:0.9px #2A8BBF;">JCE</div>
<div class="a" style="left:314.53px;top:222.57px;font-family:'Liberation Sans',sans-serif;font-size:13.5px;font-weight:bold;color:#1a1a1a;transform:scaleX(0.8732);-webkit-text-stroke:0.35px #1a1a1a;">Recintos</div>
<div class="a" style="left:387.60px;top:222.57px;font-family:'Liberation Sans',sans-serif;font-size:13.5px;font-weight:bold;color:#1a1a1a;transform:scaleX(0.8404);-webkit-text-stroke:0.35px #1a1a1a;">Colegios</div>
<div class="a" style="left:453.72px;top:222.57px;font-family:'Liberation Sans',sans-serif;font-size:13.5px;font-weight:bold;color:#1a1a1a;transform:scaleX(0.8814);-webkit-text-stroke:0.35px #1a1a1a;">Electores</div>
<div class="a" style="left:524.34px;top:222.57px;font-family:'Liberation Sans',sans-serif;font-size:13.5px;font-weight:bold;color:#1a1a1a;transform:scaleX(0.8557);-webkit-text-stroke:0.35px #1a1a1a;">Recintos Con EyT</div>
<div class="a" style="left:107.54px;top:255.77px;font-family:'Liberation Sans',sans-serif;font-size:13.5px;font-weight:bold;color:#141414;transform:scaleX(0.8585);-webkit-text-stroke:0.35px #141414;">DAJABON</div>
<div class="a" style="left:328.82px;top:257.77px;font-family:'Liberation Sans',sans-serif;font-size:13.5px;font-weight:bold;color:#141414;transform:scaleX(0.9600);-webkit-text-stroke:0.35px #141414;">19</div>
<div class="a" style="left:401.00px;top:257.77px;font-family:'Liberation Sans',sans-serif;font-size:13.5px;font-weight:bold;color:#141414;transform:scaleX(0.9600);-webkit-text-stroke:0.35px #141414;">46</div>
<div class="a" style="left:457.34px;top:257.77px;font-family:'Liberation Sans',sans-serif;font-size:13.5px;font-weight:bold;color:#141414;transform:scaleX(0.9600);-webkit-text-stroke:0.35px #141414;">18,357</div>
<div class="a" style="left:563.52px;top:257.77px;font-family:'Liberation Sans',sans-serif;font-size:13.5px;font-weight:bold;color:#141414;transform:scaleX(0.9600);-webkit-text-stroke:0.35px #141414;">12</div>
<div class="a" style="left:114.89px;top:289.87px;font-family:'Liberation Sans',sans-serif;font-size:13.5px;color:#2e2e2e;transform:scaleX(0.9137);-webkit-text-stroke:0.5px #2e2e2e;">CAÑONGO (DM)</div>
<div class="a" style="left:333.00px;top:291.87px;font-family:'Liberation Sans',sans-serif;font-size:13.5px;color:#2e2e2e;transform:scaleX(1.0001);-webkit-text-stroke:0.5px #2e2e2e;">2</div>
<div class="a" style="left:404.70px;top:291.87px;font-family:'Liberation Sans',sans-serif;font-size:13.5px;color:#2e2e2e;transform:scaleX(1.0001);-webkit-text-stroke:0.5px #2e2e2e;">7</div>
<div class="a" style="left:460.00px;top:291.87px;font-family:'Liberation Sans',sans-serif;font-size:13.5px;color:#2e2e2e;transform:scaleX(1.0001);-webkit-text-stroke:0.5px #2e2e2e;">1,980</div>
<div class="a" style="left:567.70px;top:291.87px;font-family:'Liberation Sans',sans-serif;font-size:13.5px;color:#2e2e2e;transform:scaleX(1.0001);-webkit-text-stroke:0.5px #2e2e2e;">2</div>
<div class="a" style="left:114.92px;top:323.17px;font-family:'Liberation Sans',sans-serif;font-size:13.5px;color:#2e2e2e;transform:scaleX(0.8790);-webkit-text-stroke:0.5px #2e2e2e;">DAJABON</div>
<div class="a" style="left:328.50px;top:325.17px;font-family:'Liberation Sans',sans-serif;font-size:13.5px;color:#2e2e2e;transform:scaleX(1.0001);-webkit-text-stroke:0.5px #2e2e2e;">17</div>
<div class="a" style="left:400.20px;top:325.17px;font-family:'Liberation Sans',sans-serif;font-size:13.5px;color:#2e2e2e;transform:scaleX(1.0001);-webkit-text-stroke:0.5px #2e2e2e;">39</div>
<div class="a" style="left:456.50px;top:325.17px;font-family:'Liberation Sans',sans-serif;font-size:13.5px;color:#2e2e2e;transform:scaleX(1.0001);-webkit-text-stroke:0.5px #2e2e2e;">16,377</div>
<div class="a" style="left:563.20px;top:325.17px;font-family:'Liberation Sans',sans-serif;font-size:13.5px;color:#2e2e2e;transform:scaleX(1.0001);-webkit-text-stroke:0.5px #2e2e2e;">10</div>
<div class="a" style="left:107.52px;top:356.17px;font-family:'Liberation Sans',sans-serif;font-size:13.5px;font-weight:bold;color:#141414;transform:scaleX(0.8769);-webkit-text-stroke:0.35px #141414;">EL PINO</div>
<div class="a" style="left:333.14px;top:358.17px;font-family:'Liberation Sans',sans-serif;font-size:13.5px;font-weight:bold;color:#141414;transform:scaleX(0.9600);-webkit-text-stroke:0.35px #141414;">9</div>
<div class="a" style="left:400.52px;top:358.17px;font-family:'Liberation Sans',sans-serif;font-size:13.5px;font-weight:bold;color:#141414;transform:scaleX(0.9600);-webkit-text-stroke:0.35px #141414;">13</div>
<div class="a" style="left:461.18px;top:358.17px;font-family:'Liberation Sans',sans-serif;font-size:13.5px;font-weight:bold;color:#141414;transform:scaleX(0.9600);-webkit-text-stroke:0.35px #141414;">4,969</div>
<div class="a" style="left:567.84px;top:358.17px;font-family:'Liberation Sans',sans-serif;font-size:13.5px;font-weight:bold;color:#141414;transform:scaleX(0.9600);-webkit-text-stroke:0.35px #141414;">2</div>
<div class="a" style="left:114.92px;top:389.47px;font-family:'Liberation Sans',sans-serif;font-size:13.5px;color:#2e2e2e;transform:scaleX(0.8784);-webkit-text-stroke:0.5px #2e2e2e;">EL PINO</div>
<div class="a" style="left:332.50px;top:391.47px;font-family:'Liberation Sans',sans-serif;font-size:13.5px;color:#2e2e2e;transform:scaleX(1.0001);-webkit-text-stroke:0.5px #2e2e2e;">6</div>
<div class="a" style="left:404.20px;top:391.47px;font-family:'Liberation Sans',sans-serif;font-size:13.5px;color:#2e2e2e;transform:scaleX(1.0001);-webkit-text-stroke:0.5px #2e2e2e;">9</div>
<div class="a" style="left:460.50px;top:391.47px;font-family:'Liberation Sans',sans-serif;font-size:13.5px;color:#2e2e2e;transform:scaleX(1.0001);-webkit-text-stroke:0.5px #2e2e2e;">3,521</div>
<div class="a" style="left:567.70px;top:391.47px;font-family:'Liberation Sans',sans-serif;font-size:13.5px;color:#2e2e2e;transform:scaleX(1.0001);-webkit-text-stroke:0.5px #2e2e2e;">2</div>
<div class="a" style="left:114.88px;top:410.57px;font-family:'Liberation Sans',sans-serif;font-size:13.5px;color:#2e2e2e;transform:scaleX(0.9186);-webkit-text-stroke:0.5px #2e2e2e;">MANUEL BUENO (DM)</div>
<div class="a" style="left:332.50px;top:412.57px;font-family:'Liberation Sans',sans-serif;font-size:13.5px;color:#2e2e2e;transform:scaleX(1.0001);-webkit-text-stroke:0.5px #2e2e2e;">3</div>
<div class="a" style="left:404.70px;top:412.57px;font-family:'Liberation Sans',sans-serif;font-size:13.5px;color:#2e2e2e;transform:scaleX(1.0001);-webkit-text-stroke:0.5px #2e2e2e;">4</div>
<div class="a" style="left:460.50px;top:412.57px;font-family:'Liberation Sans',sans-serif;font-size:13.5px;color:#2e2e2e;transform:scaleX(1.0001);-webkit-text-stroke:0.5px #2e2e2e;">1,448</div>
<div class="a" style="left:107.54px;top:444.07px;font-family:'Liberation Sans',sans-serif;font-size:13.5px;font-weight:bold;color:#141414;transform:scaleX(0.8576);-webkit-text-stroke:0.35px #141414;">LOMA DE CABRERA</div>
<div class="a" style="left:328.82px;top:446.07px;font-family:'Liberation Sans',sans-serif;font-size:13.5px;font-weight:bold;color:#141414;transform:scaleX(0.9600);-webkit-text-stroke:0.35px #141414;">19</div>
<div class="a" style="left:401.00px;top:446.07px;font-family:'Liberation Sans',sans-serif;font-size:13.5px;font-weight:bold;color:#141414;transform:scaleX(0.9600);-webkit-text-stroke:0.35px #141414;">30</div>
<div class="a" style="left:457.82px;top:446.07px;font-family:'Liberation Sans',sans-serif;font-size:13.5px;font-weight:bold;color:#141414;transform:scaleX(0.9600);-webkit-text-stroke:0.35px #141414;">11,741</div>
<div class="a" style="left:563.52px;top:446.07px;font-family:'Liberation Sans',sans-serif;font-size:13.5px;font-weight:bold;color:#141414;transform:scaleX(0.9600);-webkit-text-stroke:0.35px #141414;">10</div>
<div class="a" style="left:114.92px;top:476.87px;font-family:'Liberation Sans',sans-serif;font-size:13.5px;color:#2e2e2e;transform:scaleX(0.8815);-webkit-text-stroke:0.5px #2e2e2e;">CAPOTILLO (DM)</div>
<div class="a" style="left:332.50px;top:478.87px;font-family:'Liberation Sans',sans-serif;font-size:13.5px;color:#2e2e2e;transform:scaleX(1.0001);-webkit-text-stroke:0.5px #2e2e2e;">3</div>
<div class="a" style="left:404.20px;top:478.87px;font-family:'Liberation Sans',sans-serif;font-size:13.5px;color:#2e2e2e;transform:scaleX(1.0001);-webkit-text-stroke:0.5px #2e2e2e;">5</div>
<div class="a" style="left:460.50px;top:478.87px;font-family:'Liberation Sans',sans-serif;font-size:13.5px;color:#2e2e2e;transform:scaleX(1.0001);-webkit-text-stroke:0.5px #2e2e2e;">1,568</div>
<div class="a" style="left:567.70px;top:478.87px;font-family:'Liberation Sans',sans-serif;font-size:13.5px;color:#2e2e2e;transform:scaleX(1.0001);-webkit-text-stroke:0.5px #2e2e2e;">2</div>
<div class="a" style="left:114.94px;top:509.57px;font-family:'Liberation Sans',sans-serif;font-size:13.5px;color:#2e2e2e;transform:scaleX(0.8609);-webkit-text-stroke:0.5px #2e2e2e;">LOMA DE CABRERA</div>
<div class="a" style="left:328.50px;top:511.57px;font-family:'Liberation Sans',sans-serif;font-size:13.5px;color:#2e2e2e;transform:scaleX(1.0001);-webkit-text-stroke:0.5px #2e2e2e;">14</div>
<div class="a" style="left:400.70px;top:511.57px;font-family:'Liberation Sans',sans-serif;font-size:13.5px;color:#2e2e2e;transform:scaleX(1.0001);-webkit-text-stroke:0.5px #2e2e2e;">21</div>
<div class="a" style="left:461.00px;top:511.57px;font-family:'Liberation Sans',sans-serif;font-size:13.5px;color:#2e2e2e;transform:scaleX(1.0001);-webkit-text-stroke:0.5px #2e2e2e;">8,696</div>
<div class="a" style="left:567.70px;top:511.57px;font-family:'Liberation Sans',sans-serif;font-size:13.5px;color:#2e2e2e;transform:scaleX(1.0001);-webkit-text-stroke:0.5px #2e2e2e;">7</div>
<div class="a" style="left:114.92px;top:543.57px;font-family:'Liberation Sans',sans-serif;font-size:13.5px;color:#2e2e2e;transform:scaleX(0.8811);-webkit-text-stroke:0.5px #2e2e2e;">SANTIAGO DE LA CRUZ (DM)</div>
<div class="a" style="left:333.00px;top:545.57px;font-family:'Liberation Sans',sans-serif;font-size:13.5px;color:#2e2e2e;transform:scaleX(1.0001);-webkit-text-stroke:0.5px #2e2e2e;">2</div>
<div class="a" style="left:404.70px;top:545.57px;font-family:'Liberation Sans',sans-serif;font-size:13.5px;color:#2e2e2e;transform:scaleX(1.0001);-webkit-text-stroke:0.5px #2e2e2e;">4</div>
<div class="a" style="left:460.50px;top:545.57px;font-family:'Liberation Sans',sans-serif;font-size:13.5px;color:#2e2e2e;transform:scaleX(1.0001);-webkit-text-stroke:0.5px #2e2e2e;">1,477</div>
<div class="a" style="left:567.20px;top:545.57px;font-family:'Liberation Sans',sans-serif;font-size:13.5px;color:#2e2e2e;transform:scaleX(1.0001);-webkit-text-stroke:0.5px #2e2e2e;">1</div>
<div class="a" style="left:107.51px;top:576.27px;font-family:'Liberation Sans',sans-serif;font-size:13.5px;font-weight:bold;color:#141414;transform:scaleX(0.8897);-webkit-text-stroke:0.35px #141414;">PARTIDO</div>
<div class="a" style="left:333.14px;top:578.27px;font-family:'Liberation Sans',sans-serif;font-size:13.5px;font-weight:bold;color:#141414;transform:scaleX(0.9600);-webkit-text-stroke:0.35px #141414;">7</div>
<div class="a" style="left:400.52px;top:578.27px;font-family:'Liberation Sans',sans-serif;font-size:13.5px;font-weight:bold;color:#141414;transform:scaleX(0.9600);-webkit-text-stroke:0.35px #141414;">12</div>
<div class="a" style="left:460.70px;top:578.27px;font-family:'Liberation Sans',sans-serif;font-size:13.5px;font-weight:bold;color:#141414;transform:scaleX(0.9600);-webkit-text-stroke:0.35px #141414;">5,814</div>
<div class="a" style="left:567.36px;top:578.27px;font-family:'Liberation Sans',sans-serif;font-size:13.5px;font-weight:bold;color:#141414;transform:scaleX(0.9600);-webkit-text-stroke:0.35px #141414;">4</div>
<div class="a" style="left:114.92px;top:610.17px;font-family:'Liberation Sans',sans-serif;font-size:13.5px;color:#2e2e2e;transform:scaleX(0.8754);-webkit-text-stroke:0.5px #2e2e2e;">PARTIDO</div>
<div class="a" style="left:333.00px;top:612.17px;font-family:'Liberation Sans',sans-serif;font-size:13.5px;color:#2e2e2e;transform:scaleX(1.0001);-webkit-text-stroke:0.5px #2e2e2e;">7</div>
<div class="a" style="left:400.20px;top:612.17px;font-family:'Liberation Sans',sans-serif;font-size:13.5px;color:#2e2e2e;transform:scaleX(1.0001);-webkit-text-stroke:0.5px #2e2e2e;">12</div>
<div class="a" style="left:460.00px;top:612.17px;font-family:'Liberation Sans',sans-serif;font-size:13.5px;color:#2e2e2e;transform:scaleX(1.0001);-webkit-text-stroke:0.5px #2e2e2e;">5,814</div>
<div class="a" style="left:567.70px;top:612.17px;font-family:'Liberation Sans',sans-serif;font-size:13.5px;color:#2e2e2e;transform:scaleX(1.0001);-webkit-text-stroke:0.5px #2e2e2e;">4</div>
<div class="a" style="left:107.55px;top:642.87px;font-family:'Liberation Sans',sans-serif;font-size:13.5px;font-weight:bold;color:#141414;transform:scaleX(0.8524);-webkit-text-stroke:0.35px #141414;">RESTAURACION</div>
<div class="a" style="left:329.30px;top:644.87px;font-family:'Liberation Sans',sans-serif;font-size:13.5px;font-weight:bold;color:#141414;transform:scaleX(0.9600);-webkit-text-stroke:0.35px #141414;">11</div>
<div class="a" style="left:400.52px;top:644.87px;font-family:'Liberation Sans',sans-serif;font-size:13.5px;font-weight:bold;color:#141414;transform:scaleX(0.9600);-webkit-text-stroke:0.35px #141414;">13</div>
<div class="a" style="left:461.18px;top:644.87px;font-family:'Liberation Sans',sans-serif;font-size:13.5px;font-weight:bold;color:#141414;transform:scaleX(0.9600);-webkit-text-stroke:0.35px #141414;">4,044</div>
<div class="a" style="left:567.36px;top:644.87px;font-family:'Liberation Sans',sans-serif;font-size:13.5px;font-weight:bold;color:#141414;transform:scaleX(0.9600);-webkit-text-stroke:0.35px #141414;">1</div>
<div class="a" style="left:115.15px;top:675.87px;font-family:'Liberation Sans',sans-serif;font-size:13.5px;color:#2e2e2e;transform:scaleX(0.8462);-webkit-text-stroke:0.5px #2e2e2e;">RESTAURACION</div>
<div class="a" style="left:329.00px;top:677.87px;font-family:'Liberation Sans',sans-serif;font-size:13.5px;color:#2e2e2e;transform:scaleX(1.0001);-webkit-text-stroke:0.5px #2e2e2e;">11</div>
<div class="a" style="left:400.20px;top:677.87px;font-family:'Liberation Sans',sans-serif;font-size:13.5px;color:#2e2e2e;transform:scaleX(1.0001);-webkit-text-stroke:0.5px #2e2e2e;">13</div>
<div class="a" style="left:460.50px;top:677.87px;font-family:'Liberation Sans',sans-serif;font-size:13.5px;color:#2e2e2e;transform:scaleX(1.0001);-webkit-text-stroke:0.5px #2e2e2e;">4,044</div>
<div class="a" style="left:567.20px;top:677.87px;font-family:'Liberation Sans',sans-serif;font-size:13.5px;color:#2e2e2e;transform:scaleX(1.0001);-webkit-text-stroke:0.5px #2e2e2e;">1</div>
<div class="a" style="left:109.00px;top:709.07px;font-family:'Liberation Sans',sans-serif;font-size:13.5px;font-weight:bold;color:#141414;transform:scaleX(0.8790);-webkit-text-stroke:0.35px #141414;">Total</div>
<div class="a" style="left:329.30px;top:711.07px;font-family:'Liberation Sans',sans-serif;font-size:13.5px;font-weight:bold;color:#141414;transform:scaleX(0.9600);-webkit-text-stroke:0.35px #141414;">65</div>
<div class="a" style="left:397.16px;top:711.07px;font-family:'Liberation Sans',sans-serif;font-size:13.5px;font-weight:bold;color:#141414;transform:scaleX(0.9600);-webkit-text-stroke:0.35px #141414;">114</div>
<div class="a" style="left:457.82px;top:711.07px;font-family:'Liberation Sans',sans-serif;font-size:13.5px;font-weight:bold;color:#141414;transform:scaleX(0.9600);-webkit-text-stroke:0.35px #141414;">44,925</div>
<div class="a" style="left:564.00px;top:711.07px;font-family:'Liberation Sans',sans-serif;font-size:13.5px;font-weight:bold;color:#141414;transform:scaleX(0.9600);-webkit-text-stroke:0.35px #141414;">29</div>
<div class="a" style="left:758.80px;top:533.68px;font-family:'Liberation Sans',sans-serif;font-size:15.5px;font-weight:bold;color:#141414;transform:scaleX(0.8842);-webkit-text-stroke:0.35px #141414;">CARGO</div>
<div class="a" style="left:996.00px;top:533.48px;font-family:'Liberation Sans',sans-serif;font-size:15.5px;font-weight:bold;color:#141414;transform:scaleX(0.9646);-webkit-text-stroke:0.35px #141414;">Cantidad</div>
<div class="a" style="left:757.90px;top:558.98px;font-family:'Liberation Sans',sans-serif;font-size:15.5px;color:#262626;transform:scaleX(0.8987);-webkit-text-stroke:0.5px #262626;">SENADOR</div>
<div class="a" style="left:1057.36px;top:558.98px;font-family:'Liberation Sans',sans-serif;font-size:15.5px;color:#262626;transform:scaleX(1.0800);-webkit-text-stroke:0.5px #262626;">1</div>
<div class="a" style="left:757.88px;top:583.98px;font-family:'Liberation Sans',sans-serif;font-size:15.5px;color:#262626;transform:scaleX(0.9205);-webkit-text-stroke:0.5px #262626;">DIPUTADOS</div>
<div class="a" style="left:1057.36px;top:583.98px;font-family:'Liberation Sans',sans-serif;font-size:15.5px;color:#262626;transform:scaleX(1.0800);-webkit-text-stroke:0.5px #262626;">2</div>
<div class="a" style="left:758.80px;top:608.98px;font-family:'Liberation Sans',sans-serif;font-size:15.5px;color:#262626;transform:scaleX(0.8556);-webkit-text-stroke:0.5px #262626;">ALCALDES</div>
<div class="a" style="left:1057.36px;top:608.98px;font-family:'Liberation Sans',sans-serif;font-size:15.5px;color:#262626;transform:scaleX(1.0800);-webkit-text-stroke:0.5px #262626;">5</div>
<div class="a" style="left:758.80px;top:633.88px;font-family:'Liberation Sans',sans-serif;font-size:15.5px;color:#262626;transform:scaleX(0.8689);-webkit-text-stroke:0.5px #262626;">VICE-ALCALDES</div>
<div class="a" style="left:1057.36px;top:633.88px;font-family:'Liberation Sans',sans-serif;font-size:15.5px;color:#262626;transform:scaleX(1.0800);-webkit-text-stroke:0.5px #262626;">5</div>
<div class="a" style="left:757.94px;top:659.18px;font-family:'Liberation Sans',sans-serif;font-size:15.5px;color:#262626;transform:scaleX(0.8609);-webkit-text-stroke:0.5px #262626;">REGIDORES</div>
<div class="a" style="left:1047.64px;top:659.18px;font-family:'Liberation Sans',sans-serif;font-size:15.5px;color:#262626;transform:scaleX(1.0800);-webkit-text-stroke:0.5px #262626;">27</div>
<div class="a" style="left:757.93px;top:684.38px;font-family:'Liberation Sans',sans-serif;font-size:15.5px;color:#262626;transform:scaleX(0.8660);-webkit-text-stroke:0.5px #262626;">SUPLENTES REGIDORES</div>
<div class="a" style="left:1047.64px;top:684.38px;font-family:'Liberation Sans',sans-serif;font-size:15.5px;color:#262626;transform:scaleX(1.0800);-webkit-text-stroke:0.5px #262626;">27</div>
<div class="a" style="left:757.94px;top:708.98px;font-family:'Liberation Sans',sans-serif;font-size:15.5px;color:#262626;transform:scaleX(0.8560);-webkit-text-stroke:0.5px #262626;">DIRECTORES</div>
<div class="a" style="left:1057.36px;top:708.98px;font-family:'Liberation Sans',sans-serif;font-size:15.5px;color:#262626;transform:scaleX(1.0800);-webkit-text-stroke:0.5px #262626;">4</div>
<div class="a" style="left:757.94px;top:734.28px;font-family:'Liberation Sans',sans-serif;font-size:15.5px;color:#262626;transform:scaleX(0.8621);-webkit-text-stroke:0.5px #262626;">SUBDIRECTORES</div>
<div class="a" style="left:1057.36px;top:734.28px;font-family:'Liberation Sans',sans-serif;font-size:15.5px;color:#262626;transform:scaleX(1.0800);-webkit-text-stroke:0.5px #262626;">4</div>
<div class="a" style="left:758.80px;top:759.18px;font-family:'Liberation Sans',sans-serif;font-size:15.5px;color:#262626;transform:scaleX(0.8562);-webkit-text-stroke:0.5px #262626;">VOCALES</div>
<div class="a" style="left:1047.64px;top:759.18px;font-family:'Liberation Sans',sans-serif;font-size:15.5px;color:#262626;transform:scaleX(1.0800);-webkit-text-stroke:0.5px #262626;">12</div>
<div class="a" style="left:1046.00px;top:784.48px;font-family:'Liberation Sans',sans-serif;font-size:15.5px;font-weight:bold;color:#141414;transform:scaleX(1.1000);-webkit-text-stroke:0.35px #141414;">87</div>
</body></html>
